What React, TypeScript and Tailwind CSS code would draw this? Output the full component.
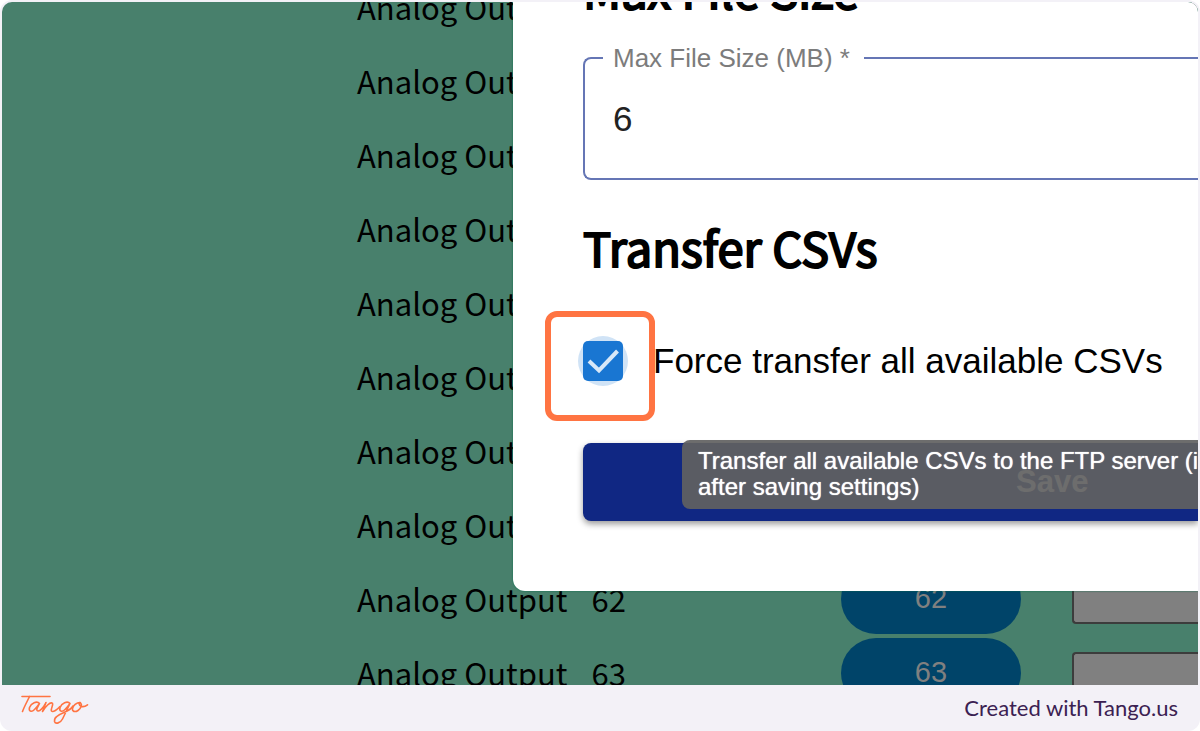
import React from "react";

const outputs = [54, 55, 56, 57, 58, 59, 60, 61, 62, 63];

function OutputRow({ n }: { n: number }) {
  return (
    <div className="flex h-[74px] shrink-0 items-center">
      <label
        htmlFor={`output-${n}`}
        className="flex w-[484px] shrink-0 gap-6 font-['Noto_Sans_CJK_SC','Noto_Sans',sans-serif] text-[31px] leading-10 text-black"
      >
        <span>Analog Output</span>
        <span>{n}</span>
      </label>
      <button
        type="button"
        className="h-[70px] w-[180px] shrink-0 rounded-full bg-[#004469] font-['Liberation_Sans',sans-serif] text-[29px] text-[#808080]"
      >
        {n}
      </button>
      <input
        id={`output-${n}`}
        type="text"
        className="mt-[4px] ml-[51px] h-[46px] min-w-0 flex-1 rounded-l-sm border-2 border-r-0 border-[#3c3c3c] bg-[#808080] px-2"
      />
    </div>
  );
}

function TangoLogo() {
  return (
    <svg
      viewBox="0 0 70 34"
      className="h-[34px] w-[70px]"
      fill="none"
      stroke="#ff7442"
      strokeWidth="1.6"
      strokeLinecap="round"
      strokeLinejoin="round"
      role="img"
      aria-label="Tango"
    >
      <path d="M2 5.5H30" />
      <path d="M9.500 5.500C7.500 10 4.500 15 2.500 20.500" />
      <path d="M19.500 12.500C17 9.500 11 12 9.500 16.500C8.500 20.500 11.500 21.500 14.500 18.500C16.500 16.500 18.500 14 19.500 12.500L17 17.500C16 20.500 19 21 21.500 18C23.500 16 25 13.500 26 11.500L22.500 20.500C25.500 15.500 30 11 32 12C34.500 13 30 18 31.500 20C33 21.500 37.500 18.500 40 15.500" />
      <path d="M50 12.500C47.500 9.500 41.500 12 40 16.500C39 20.500 42 21.500 45 18.500C47 16.500 49 14 50 12.500L42.500 28C40.500 32 35.500 33.500 34.500 30.500C33.500 26.500 39 23.500 44 21.500C49 19.500 51.500 17.500 53 15" />
      <path d="M60 11.500C56.500 11.500 53 14.500 52.500 17.500C52 20.500 55 21.500 58 19.500C61 17.500 62.500 13.500 60.500 11.800C58.500 11 58.500 14.500 61.500 15.500C63.500 16 66 15 67.500 13.800" />
    </svg>
  );
}

function SettingsDialog() {
  return (
    <section
      role="dialog"
      aria-label="Settings"
      className="absolute top-0 right-0 left-[511px] overflow-hidden rounded-bl-xl bg-white pb-[70px] pl-[70px] shadow-[0_0_2px_#006b49]"
    >
      <h2 className="-mt-[41px] font-['Noto_Sans_CJK_SC','Noto_Sans',sans-serif] text-[47px] leading-[56px] font-normal text-black [-webkit-text-stroke:2px_black]">
        Max File Size
      </h2>
      <fieldset className="mt-[27px] h-[136px] rounded-l-lg border-2 border-r-0 border-[#6576b5] pl-[18px] font-['Liberation_Sans',sans-serif]">
        <legend className="pr-[14px] pl-[10px] text-[26px] leading-7 text-[#7c7c7c]">
          <label htmlFor="max-size">Max File Size (MB) *</label>
        </legend>
        <input
          id="max-size"
          type="text"
          defaultValue="6"
          className="mt-5 w-full bg-transparent px-[10px] text-[35px] leading-[54px] text-[#222222] outline-none"
        />
      </fieldset>
      <h2 className="mt-[37px] font-['Noto_Sans_CJK_SC','Noto_Sans',sans-serif] text-[47px] leading-[60px] font-normal text-black [-webkit-text-stroke:2px_black]">
        Transfer CSVs
      </h2>
      <div className="mt-[29px] flex h-[110px] items-center">
        <span className="relative flex size-10 shrink-0 items-center justify-center">
          <span className="absolute size-[50px] rounded-full bg-[#d0e3f6]" />
          <input
            id="force"
            type="checkbox"
            defaultChecked
            className="relative size-10 appearance-none rounded-[5px] bg-[#1976d2]"
          />
          <svg
            viewBox="0 0 40 40"
            className="pointer-events-none absolute size-10"
            fill="none"
            stroke="#d8e8f8"
            strokeWidth="4"
            aria-hidden="true"
          >
            <path d="M6 20L16 29.500L34.500 10" />
          </svg>
          <span className="pointer-events-none absolute size-[110px] translate-x-[-3px] translate-y-[5px] rounded-xl border-[6px] border-[#ff7442]" />
        </span>
        <label
          htmlFor="force"
          className="ml-[30px] font-['Liberation_Sans',sans-serif] text-[35px] whitespace-nowrap text-black"
        >
          Force transfer all available CSVs
        </label>
      </div>
      <div className="relative mt-[27px]">
        <button
          type="button"
          className="h-[78px] w-full rounded-l-lg bg-[#102783] pl-[433px] text-left font-['Liberation_Sans',sans-serif] text-[31px] font-bold text-white shadow-[0_3px_6px_#00000066]"
        >
          Save
        </button>
        <div
          role="tooltip"
          className="absolute -top-[3px] right-0 left-[99px] h-[69px] overflow-hidden rounded-l-lg bg-[#616161eb] py-2 pl-4 font-['Liberation_Sans',sans-serif] text-[24px] leading-[26px] font-medium whitespace-nowrap text-white [text-shadow:0_0_1px_white]"
        >
          Transfer all available CSVs to the FTP server (immediately
          <br />
          after saving settings)
        </div>
      </div>
    </section>
  );
}

export default function App() {
  return (
    <div className="h-screen bg-white">
      <div className="flex h-full flex-col overflow-hidden rounded-xl bg-[#f3f1f7]">
        <main className="relative mx-[2px] mt-[2px] min-h-0 flex-1 overflow-hidden rounded-t-[10px]">
          <div className="flex h-full flex-col justify-center bg-[#48806c] pb-[7px] pl-[355px]">
            {outputs.map((n) => (
              <OutputRow key={n} n={n} />
            ))}
          </div>
          <SettingsDialog />
        </main>
        <footer className="flex h-[46px] shrink-0 items-center justify-between pr-[22px] pl-5">
          <TangoLogo />
          <a
            href="https://tango.us"
            className="font-['Lato',sans-serif] text-[22px] leading-7 text-[#3b2152]"
          >
            Created with Tango.us
          </a>
        </footer>
      </div>
    </div>
  );
}
